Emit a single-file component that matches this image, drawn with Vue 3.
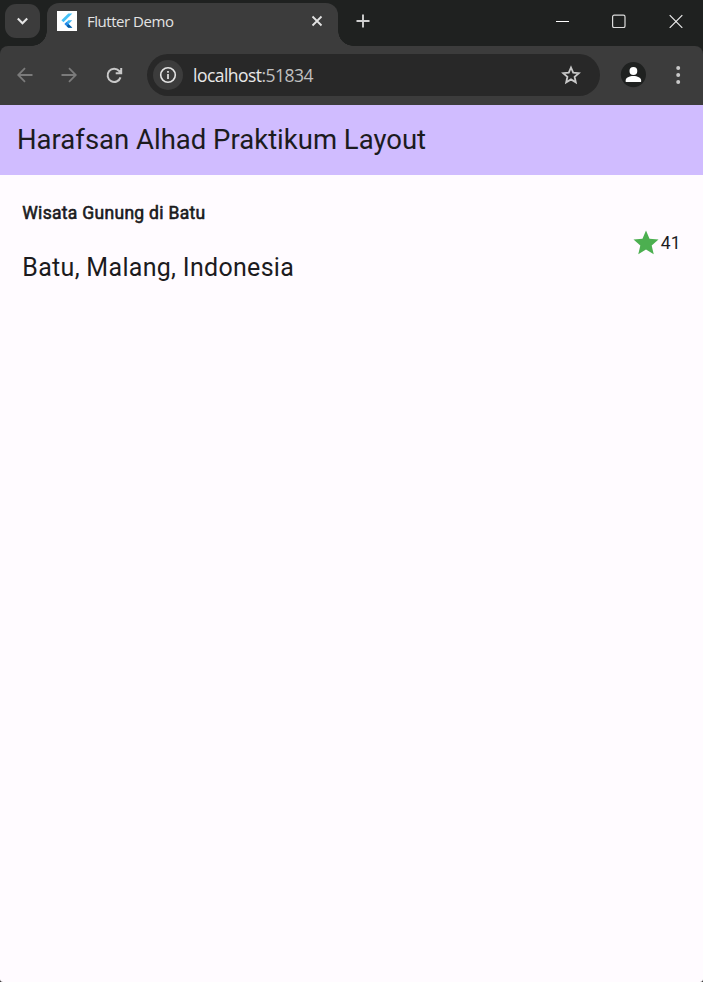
<script setup>
const tabTitle = 'Flutter Demo'
const host = 'localhost'
const port = ':51834'
const appTitle = 'Harafsan Alhad Praktikum Layout'
const place = { name: 'Wisata Gunung di Batu', location: 'Batu, Malang, Indonesia', rating: 41 }
</script>

<template>
  <div class="window">
    <header class="tabstrip">
      <div class="tab-search">
        <svg width="35" height="34" viewBox="0 0 35 34"><path d="M12.8 14.5 17.5 19.2 22.2 14.5" fill="none" stroke="#e6e6e6" stroke-width="2.1" /></svg>
      </div>
      <div class="tab">
        <svg class="favicon" width="20" height="20" viewBox="0 0 20 20">
          <rect width="20" height="20" fill="#fff" />
          <path d="M11.3 2.4h4L6.5 11.2 4.4 9.2z" fill="#45c2f8" />
          <path d="M11.3 9.2h4l-3.7 3.7 3.7 3.8h-4L7.5 12.9z" fill="#42b8f5" />
          <path d="m9.5 14.9 2-2 3.8 3.8h-4z" fill="#075aa5" />
          <path d="m7.5 12.9 2-2 2 2-2 2z" fill="#2687e9" />
        </svg>
        <span class="tab-title">{{ tabTitle }}</span>
        <svg class="tab-close" width="12" height="12" viewBox="0 0 12 12"><path d="m1.5 1.5 9 9m0-9-9 9" stroke="#e3e3e3" stroke-width="1.8" /></svg>
      </div>
      <svg class="new-tab" width="14" height="14" viewBox="0 0 14 14"><path d="M7 .5v13M.5 7h13" stroke="#d0d0d0" stroke-width="1.9" /></svg>
      <div class="controls">
        <svg width="14" height="14" viewBox="0 0 14 14"><path d="M0 7.5h13" stroke="#fff" /></svg>
        <svg width="14" height="14" viewBox="0 0 14 14"><rect x=".6" y="1.2" width="12.4" height="12.4" rx="1.6" fill="none" stroke="#dcdcdc" stroke-width="1.2" /></svg>
        <svg width="14" height="14" viewBox="0 0 14 14"><path d="m.7 1.2 12.6 12.6m0-12.6L.7 13.8" stroke="#ededed" stroke-width="1.2" /></svg>
      </div>
    </header>

    <div class="toolbar-back">
      <div class="toolbar">
        <svg class="back" width="16" height="16" viewBox="0 0 16 16"><path d="M15.5 8H1.8M8 1.2 1.2 8 8 14.8" fill="none" stroke="#7b7b7b" stroke-width="1.8" /></svg>
        <svg class="forward" width="16" height="16" viewBox="0 0 16 16"><path d="M.5 8h13.7M8 1.2 14.8 8 8 14.8" fill="none" stroke="#7b7b7b" stroke-width="1.8" /></svg>
        <svg class="reload" width="17" height="17" viewBox="0 0 17 17"><path d="M14.5 10.4A6.6 6.6 0 1 1 13.2 4L15 6M15.2.9v5.4H9.7" fill="none" stroke="#c9c9c9" stroke-width="2" /></svg>
        <div class="omnibox">
          <span class="site-info">
            <svg width="18" height="18" viewBox="0 0 18 18"><circle cx="9" cy="9" r="7.3" fill="none" stroke="#e3e3e3" stroke-width="1.6" /><path d="M9 8v5M9 4.9v1.8" stroke="#e3e3e3" stroke-width="1.7" /></svg>
          </span>
          <span class="url">{{ host }}<span class="port">{{ port }}</span></span>
          <svg class="bookmark" width="20" height="20" viewBox="0 0 20 20"><path d="m10 2.5 2.2 5.1 5.6.5-4.2 3.7 1.2 5.5-4.8-2.9-4.8 2.9 1.2-5.5-4.2-3.7 5.6-.5z" fill="none" stroke="#c9c9c9" stroke-width="1.8" /></svg>
        </div>
        <svg class="profile" width="26" height="26" viewBox="0 0 26 26"><circle cx="13.4" cy="12.6" r="12.6" fill="#1f2120" /><circle cx="13.4" cy="9" r="3.9" fill="#fff" /><path d="M5.7 20v-1.8c0-2.3 3.7-4.2 7.7-4.2s7.7 1.9 7.7 4.2V20z" fill="#fff" /></svg>
        <svg class="menu" width="6" height="20" viewBox="0 0 6 20"><g fill="#c9c9c9"><circle cx="3.2" cy="3" r="2" /><circle cx="3.2" cy="10" r="2" /><circle cx="3.2" cy="17" r="2" /></g></svg>
      </div>
    </div>

    <div class="appbar"><span class="app-title">{{ appTitle }}</span></div>
    <main class="page">
      <div class="place">
        <div class="place-name"><span>{{ place.name }}</span></div>
        <div class="place-location">{{ place.location }}</div>
      </div>
      <div class="rating">
        <svg width="30" height="30" viewBox="0 0 24 24"><path d="M12 17.27 18.18 21l-1.64-7.03L22 9.24l-7.19-.61L12 2 9.19 8.63 2 9.24l5.46 4.73L5.82 21z" fill="#4caf50" /></svg>
        <span>{{ place.rating }}</span>
      </div>
    </main>
  </div>
</template>

<style>
body { margin: 0; background: #303030; overflow: hidden; }
</style>

<style scoped>
* { box-sizing: border-box; }
svg { display: block; flex: none; }
.window {
  display: flex;
  flex-direction: column;
  width: 703px;
  height: 982px;
  border-radius: 0 0 3px 3px;
  background: #fffbff;
  color: #1c1b1e;
  font-family: Roboto, sans-serif;
}
.tabstrip { display: flex; height: 46px; background: #1f2120; }
.tab-search { width: 35px; height: 34px; margin: 4px 7px 0 5px; border-radius: 11px; background: #3c3c3c; flex: none; }
.tab {
  position: relative;
  display: flex;
  align-items: center;
  width: 291px;
  height: 43px;
  margin-top: 3px;
  padding: 0 15px 7px 10px;
  border-radius: 12px 12px 0 0;
  background: #3c3c3c;
  flex: none;
}
.tab::before, .tab::after { content: ''; position: absolute; bottom: 0; width: 15px; height: 15px; }
.tab::before { left: -15px; background: radial-gradient(circle at 0 0, transparent 14.5px, #3c3c3c 15px); }
.tab::after { right: -15px; background: radial-gradient(circle at 100% 0, transparent 14.5px, #3c3c3c 15px); }
.tab-title { margin-left: 10px; font: 15px/20px "Open Sans", sans-serif; letter-spacing: -0.47px; color: #e3e3e3; white-space: nowrap; }
.tab-close { margin-left: auto; }
.new-tab { margin: 14px 0 0 18px; }
.controls { display: flex; gap: 43px; margin: 14px 19px 0 auto; }
.controls svg { width: 14px; }
.controls { padding-right: 1px; }
.controls svg:first-child { margin-right: -1px; }
.toolbar-back { height: 59px; background: #1f2120; flex: none; }
.toolbar { display: flex; align-items: center; height: 59px; padding: 0 0 1px 17px; border-radius: 8px 8px 0 0; background: #3c3c3c; }
.forward { margin-left: 28px; }
.reload { margin-left: 29px; }
.omnibox { display: flex; align-items: center; width: 453px; height: 42px; margin-left: 24px; padding: 0 19px 0 6px; border-radius: 21px; background: #282828; }
.site-info { display: flex; align-items: center; justify-content: center; width: 30px; height: 30px; border-radius: 50%; background: #3c3c3c; }
.url { margin-left: 10px; padding-bottom: 1px; font: 17.5px/24px "Open Sans", sans-serif; letter-spacing: -0.53px; color: #e8e8e8; white-space: nowrap; }
.port { color: #c0c0c0; }
.bookmark { margin-left: auto; }
.profile { margin-left: 20px; }
.menu { margin-left: 29px; }
.appbar { display: flex; align-items: center; height: 70px; padding-left: 17px; background: #d0bcff; flex: none; }
.app-title { font-size: 27.5px; line-height: 36px; white-space: nowrap; }
.page { display: flex; justify-content: space-between; padding: 27px 22px 0 22.3px; }
.place-name { font-size: 17.5px; line-height: 22px; letter-spacing: 0.3px; -webkit-text-stroke: 0.6px #1c1b1e; white-space: nowrap; }
.place-location { margin-top: 29px; font-size: 25px; line-height: 30px; letter-spacing: 0.3px; white-space: nowrap; }
.rating { display: flex; align-items: center; height: 30px; margin-top: 26px; font-size: 17.5px; letter-spacing: 0.3px; }
</style>
